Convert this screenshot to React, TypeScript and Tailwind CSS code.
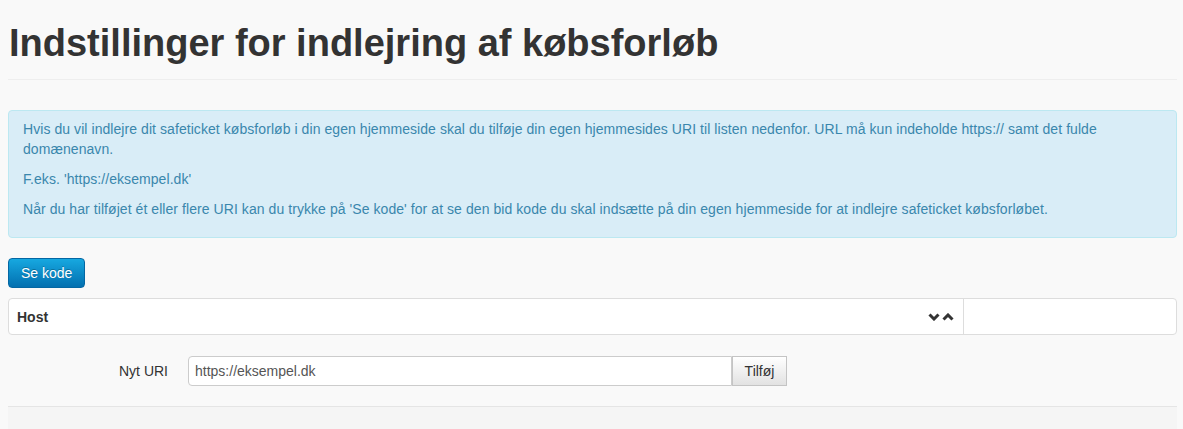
import React from "react";

function Chevrons() {
  return (
    <div className="flex items-center gap-[2px]">
      <svg width="12" height="8" viewBox="0 0 12 8">
        <polyline points="1.5,1.5 6,6 10.5,1.5" fill="none" stroke="#333" strokeWidth="3" strokeLinejoin="miter" />
      </svg>
      <svg width="12" height="8" viewBox="0 0 12 8">
        <polyline points="1.5,6.5 6,2 10.5,6.5" fill="none" stroke="#333" strokeWidth="3" strokeLinejoin="miter" />
      </svg>
    </div>
  );
}

export default function App() {
  return (
    <div
      className="min-h-[429px] bg-[#f9f9f9] text-[#333] text-[14px] leading-[20px] overflow-hidden"
      style={{ fontFamily: '"Liberation Sans", Arial, Helvetica, sans-serif' }}
    >
      <div className="ml-2 w-[1169px]">
        <div className="pt-[23px] pb-[16px] border-b border-[#eeeeee]">
          <h1 className="text-[38px] leading-[40px] font-bold text-[#333] ml-[1px]">
            Indstillinger for indlejring af købsforløb
          </h1>
        </div>

        <div className="mt-[30px] rounded-[4px] border border-[#bce8f1] bg-[#d9edf7] text-[#3a87ad] pt-[8px] pb-[8px] pl-[14px] pr-[35px] tracking-[0.065px]">
          <p className="mb-[10px]">
            Hvis du vil indlejre dit safeticket købsforløb i din egen hjemmeside skal du tilføje din egen hjemmesides URI til listen nedenfor. URL må kun indeholde https:// samt det fulde domænenavn.
          </p>
          <p className="mb-[10px]">F.eks. 'https://eksempel.dk'</p>
          <p className="mb-[10px]">
            Når du har tilføjet ét eller flere URI kan du trykke på 'Se kode' for at se den bid kode du skal indsætte på din egen hjemmeside for at indlejre safeticket købsforløbet.
          </p>
        </div>

        <div className="mt-[20px]">
          <button className="h-[30px] px-[12px] rounded-[4px] border border-[#0467a3] text-white text-[14px] leading-[20px] bg-gradient-to-b from-[#17a8e0] to-[#0470b0] [text-shadow:0_-1px_0_rgba(0,0,0,0.25)]">
            Se kode
          </button>
        </div>

        <div className="mt-[10px] flex h-[37px] rounded-[4px] border border-[#dddddd] bg-white">
          <div className="flex flex-1 items-center justify-between pl-[8px] pr-[9px] border-r border-[#dddddd]">
            <span className="font-bold text-[#333]">Host</span>
            <Chevrons />
          </div>
          <div className="w-[212px]" />
        </div>

        <div className="mt-[21px] flex items-center">
          <label className="w-[160px] text-right text-[#333]">Nyt URI</label>
          <div className="ml-[20px] flex">
            <input
              defaultValue="https://eksempel.dk"
              className="h-[30px] w-[544px] rounded-l-[4px] border border-[#cccccc] bg-white px-[6px] text-[14px] text-[#555] outline-none"
              style={{ fontFamily: '"Liberation Sans", Arial, sans-serif' }}
            />
            <button className="h-[30px] w-[55px] border border-[#c4c4c4] bg-gradient-to-b from-[#ffffff] to-[#e2e2e2] text-[14px] text-[#333]">
              Tilføj
            </button>
          </div>
        </div>

        <div className="mt-[20px] h-[40px] border-t border-[#e5e5e5] bg-[#f5f5f5]" />
      </div>
    </div>
  );
}
